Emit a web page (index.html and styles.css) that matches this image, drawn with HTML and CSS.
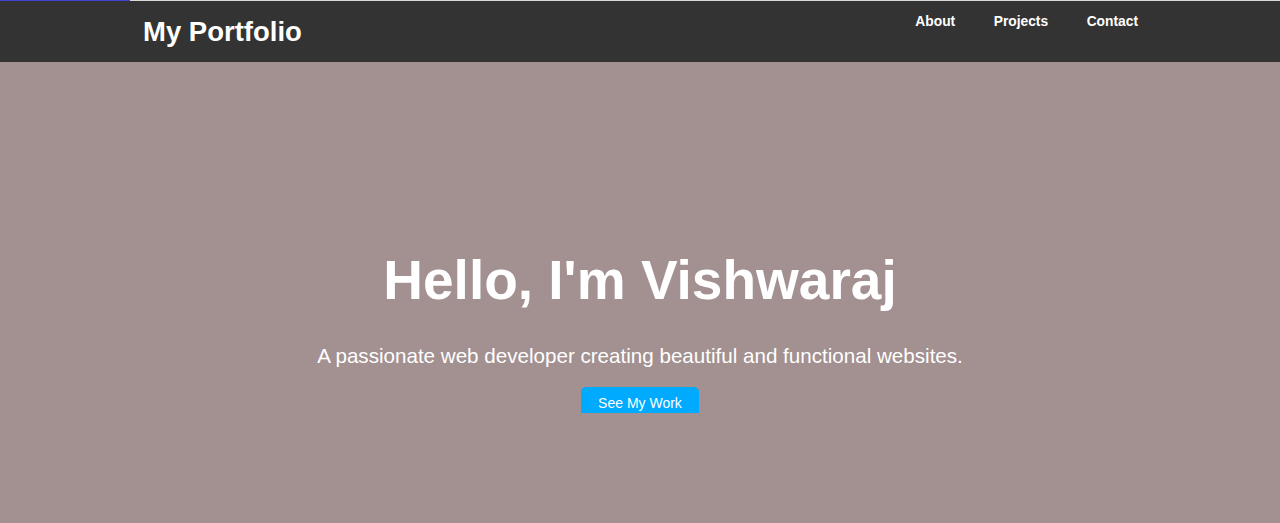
FILE: index.html
```html
<!DOCTYPE html>
<html lang="en">
<head>
<meta charset="utf-8">
<title>My Portfolio</title>
<link rel="stylesheet" href="styles.css">
</head>
<body>
<div class="progress"><div class="progress-fill"></div></div>
<header class="site-header">
  <div class="container header-inner">
    <h1 class="logo">My Portfolio</h1>
    <nav class="nav">
      <a href="#about">About</a>
      <a href="#projects">Projects</a>
      <a href="#contact">Contact</a>
    </nav>
  </div>
</header>
<section class="hero">
  <h2 class="hero-title">Hello, I'm Vishwaraj</h2>
  <p class="hero-text">A passionate web developer creating beautiful and functional websites.</p>
  <a class="btn" href="#projects">See My Work</a>
</section>
</body>
</html>
```
FILE: styles.css
```css
* { box-sizing: border-box; }
html, body { margin: 0; padding: 0; height: 100%; }
body {
  font-family: "Liberation Sans", Arial, sans-serif;
  background: #a39090;
  color: #fff;
  overflow: hidden;
}
.progress { height: 1px; background: #d8d8d8; }
.progress-fill { width: 130px; height: 1px; background: #4343d3; }
.site-header { background: #333; height: 61px; }
.container { width: 80%; margin: 0 auto; padding: 0 14px 0 15px; }
.header-inner { display: flex; justify-content: space-between; align-items: flex-start; height: 100%; }
.logo { margin: 0; font-size: 27.5px; font-weight: bold; line-height: 62px; }
.nav { display: flex; gap: 38.5px; padding-top: 12px; }
.nav a { color: #fff; text-decoration: none; font-weight: bold; font-size: 13.8px; line-height: 18px; }
.hero { display: flex; flex-direction: column; align-items: center; text-align: center; padding-top: 182px; }
.hero-title { margin: 0; font-size: 55px; font-weight: bold; line-height: 72px; }
.hero-text { margin: 28px 0 0; font-size: 20.6px; line-height: 24px; }
.btn {
  margin-top: 19px;
  display: inline-block;
  background: #00aaff;
  color: #fff;
  text-decoration: none;
  font-size: 14px;
  line-height: 20px;
  height: 26px;
  padding: 6px 17px 0;
  border-radius: 5px 5px 0 0;
  overflow: hidden;
}
```
